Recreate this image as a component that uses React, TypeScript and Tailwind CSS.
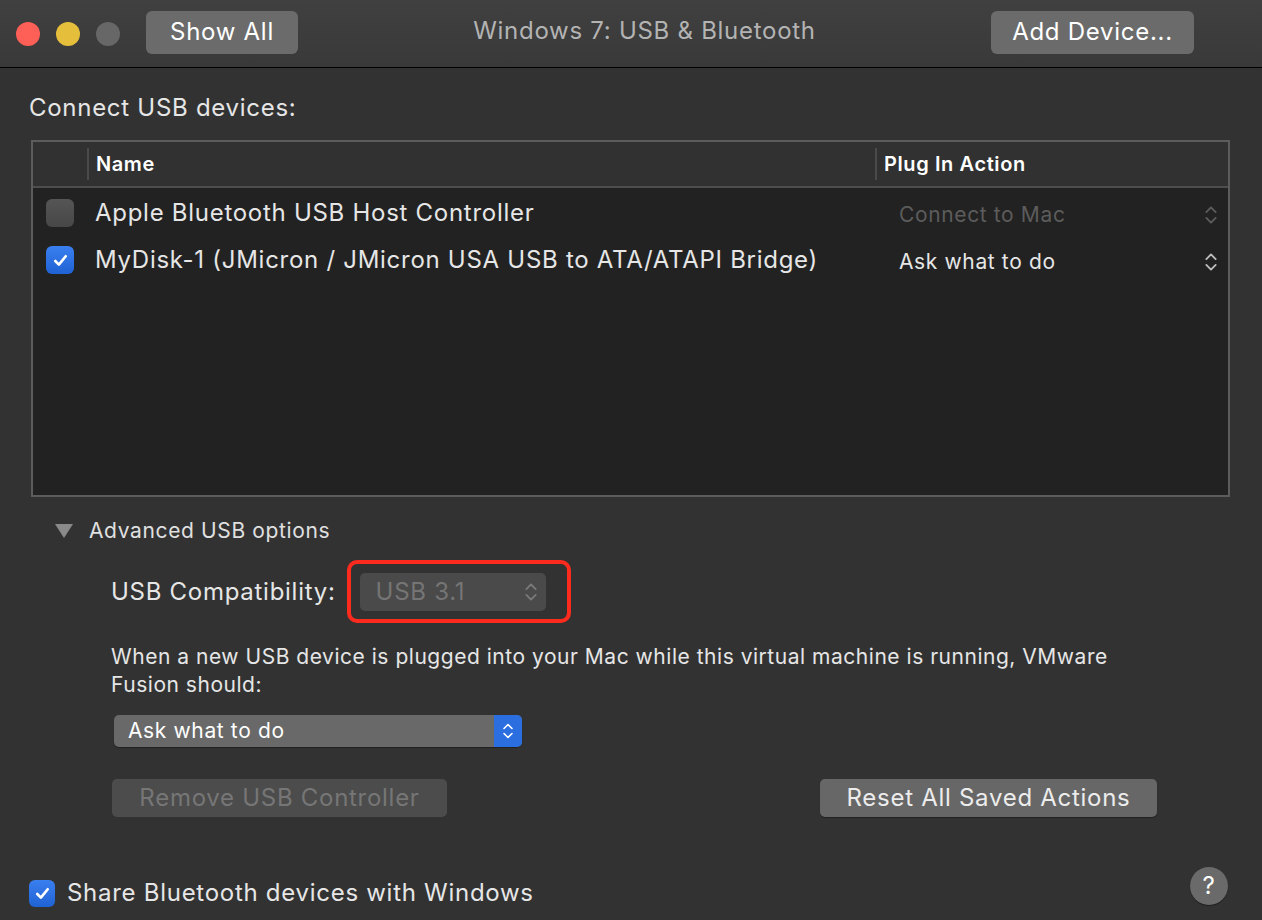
import React from 'react';

const font = { fontFamily: 'Inter, "Noto Sans", sans-serif' };

const UpDown = ({ className }: { className?: string }) => (
  <svg viewBox="0 0 12 20" className={className} fill="none" stroke="currentColor" strokeWidth="1.6" strokeLinecap="round" strokeLinejoin="round">
    <path d="M2 7.5 L6 3.5 L10 7.5" />
    <path d="M2 12.5 L6 16.5 L10 12.5" />
  </svg>
);

const Check = () => (
  <svg viewBox="0 0 20 20" className="w-[19px] h-[19px]" fill="none" stroke="white" strokeWidth="2.8" strokeLinecap="round" strokeLinejoin="round">
    <path d="M4.5 10.5 L8.3 14.3 L15.5 5.5" />
  </svg>
);

const Checkbox = ({ checked, size = 'w-[28px] h-[28px]' }: { checked: boolean; size?: string }) =>
  checked ? (
    <div className={`${size} rounded-[6px] bg-gradient-to-b from-[#3a7ff0] to-[#1f62d4] flex items-center justify-center shrink-0`}>
      <Check />
    </div>
  ) : (
    <div className={`${size} rounded-[6px] bg-gradient-to-b from-[#555555] to-[#474747] shrink-0`} />
  );

export default function App() {
  return (
    <div className="w-[1262px] h-[920px] bg-[#323232] text-[#e6e6e6] flex flex-col overflow-hidden tracking-[0.045em]" style={font}>
      {/* Title bar */}
      <div className="h-[68px] shrink-0 bg-gradient-to-b from-[#404040] to-[#393939] border-b border-black flex items-center relative">
        <div className="flex items-center gap-[16px] pl-[16px]">
          <div className="w-[24px] h-[24px] rounded-full bg-[#fe5f57]" />
          <div className="w-[24px] h-[24px] rounded-full bg-[#e5bf3c]" />
          <div className="w-[24px] h-[24px] rounded-full bg-[#676767]" />
        </div>
        <button className="ml-[26px] w-[152px] h-[43px] rounded-[6px] bg-[#6b6b6b] text-white text-[24px] tracking-[0.03em] mb-[3px]">Show All</button>
        <div className="flex-1 text-center text-[24px] text-[#b3b3b3] mb-[5px]">Windows 7: USB &amp; Bluetooth</div>
        <button className="mr-[68px] w-[203px] h-[43px] rounded-[6px] bg-[#6b6b6b] text-white text-[24px] tracking-[0.03em] mb-[3px]">Add Device...</button>
      </div>

      {/* Body */}
      <div className="flex-1 flex flex-col pl-[29px]">
        <div className="mt-[26px] h-[28px] leading-[28px] text-[24px] text-[#e6e6e6]">Connect USB devices:</div>

        {/* Table */}
        <div className="mt-[18px] ml-[2px] w-[1199px] h-[357px] border-2 border-[#5c5c5c] bg-[#222222] flex flex-col">
          <div className="h-[46px] bg-[#313131] border-b-2 border-[#4e4e4e] flex items-center text-[20px] font-semibold text-white tracking-[0.03em]">
            <div className="w-[54px] h-full" />
            <div className="w-[2px] h-[32px] bg-[#4a4a4a]" />
            <div className="w-[786px] pl-[7px]">Name</div>
            <div className="w-[2px] h-[32px] bg-[#4a4a4a]" />
            <div className="pl-[7px]">Plug In Action</div>
          </div>
          <div className="flex items-center h-[48px] pt-[1px]">
            <div className="w-[62px] pl-[13px]"><Checkbox checked={false} /></div>
            <div className="w-[804px] text-[24px] text-[#e6e6e6]">Apple Bluetooth USB Host Controller</div>
            <div className="flex-1 flex items-center justify-between pr-[10px] text-[21px] tracking-[0.03em] text-[#5c5c5c] pt-[4px]">
              <span>Connect to Mac</span>
              <UpDown className="w-[14px] h-[24px] text-[#5c5c5c]" />
            </div>
          </div>
          <div className="flex items-center h-[48px]">
            <div className="w-[62px] pl-[13px]"><Checkbox checked={true} /></div>
            <div className="w-[804px] text-[24px] text-[#e6e6e6]">MyDisk-1 (JMicron / JMicron USA USB to ATA/ATAPI Bridge)</div>
            <div className="flex-1 flex items-center justify-between pr-[10px] text-[21px] tracking-[0.03em] text-[#e6e6e6] pt-[4px]">
              <span>Ask what to do</span>
              <UpDown className="w-[14px] h-[24px] text-[#bdbdbd]" />
            </div>
          </div>
        </div>

        {/* Advanced */}
        <div className="mt-[20px] h-[28px] flex items-center pl-[26px] gap-[16px] text-[21px] tracking-[0.03em] text-[#e0e0e0]">
          <svg viewBox="0 0 18 14" className="w-[18px] h-[14px]"><path d="M0 0 L18 0 L9 14 Z" fill="#8a8a8a" /></svg>
          <span>Advanced USB options</span>
        </div>

        <div className="mt-[15px] flex items-center pl-[82px]">
          <span className="text-[24px] text-[#e6e6e6] mr-[11px]">USB Compatibility:</span>
          <div className="w-[224px] h-[63px] rounded-[10px] border-4 border-[#fc2b1e] flex items-center pl-[9px]">
            <div className="w-[186px] h-[38px] rounded-[5px] bg-[#4a4a4a] flex items-center justify-between pl-[16px] pr-[8px] text-[24px] text-[#757575]">
              <span>USB 3.1</span>
              <UpDown className="w-[14px] h-[24px] text-[#7a7a7a]" />
            </div>
          </div>
        </div>

        <div className="mt-[20px] pl-[82px] text-[21px] leading-[28px] tracking-[0.025em] text-[#e6e6e6]">
          <div>When a new USB device is plugged into your Mac while this virtual machine is running, VMware</div>
          <div>Fusion should:</div>
        </div>

        <div className="mt-[16px] ml-[85px] w-[408px] h-[32px] rounded-[5px] bg-[#696969] flex items-center overflow-hidden shadow-[0_1px_1px_rgba(0,0,0,0.35)]">
          <span className="flex-1 pl-[14px] text-[21px] tracking-[0.03em] text-white">Ask what to do</span>
          <div className="w-[28px] h-full bg-[#2a6ee0] flex items-center justify-center">
            <UpDown className="w-[12px] h-[22px] text-white" />
          </div>
        </div>

        <div className="mt-[32px] ml-[83px] flex items-center">
          <button className="w-[335px] h-[38px] rounded-[5px] bg-[#4c4c4c] text-[24px] text-[#767676]">Remove USB Controller</button>
          <button className="ml-[373px] w-[337px] h-[38px] rounded-[5px] bg-[#676767] text-[24px] text-[#ececec] shadow-[0_1px_1px_rgba(0,0,0,0.35)]">Reset All Saved Actions</button>
        </div>

        <div className="mt-[50px] flex items-start pr-[34px]">
          <div className="mt-[12px] h-[28px] flex items-center gap-[12px]">
            <Checkbox checked={true} size="w-[26px] h-[27px]" />
            <span className="text-[24px] text-[#e6e6e6]">Share Bluetooth devices with Windows</span>
          </div>
          <div className="ml-auto w-[38px] h-[38px] rounded-full bg-[#6a6a6a] flex items-center justify-center text-white text-[24px] shadow-[0_1px_1px_rgba(0,0,0,0.4)]">?</div>
        </div>
      </div>
    </div>
  );
}
